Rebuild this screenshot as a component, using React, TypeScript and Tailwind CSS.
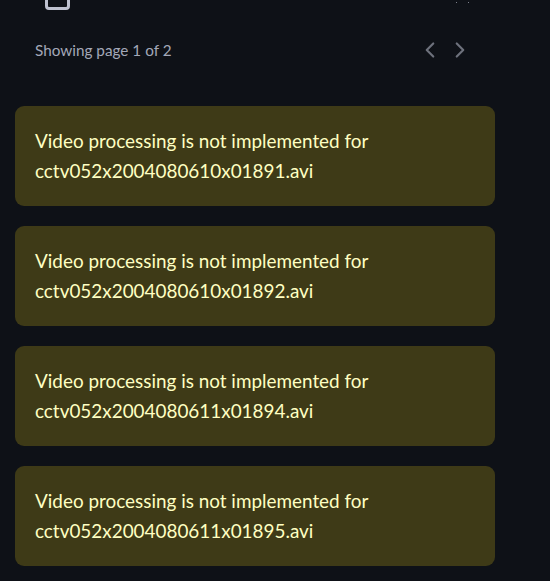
import React from "react";
import { ChevronLeft, ChevronRight } from "lucide-react";

const files = [
  "cctv052x2004080610x01891.avi",
  "cctv052x2004080610x01892.avi",
  "cctv052x2004080611x01894.avi",
  "cctv052x2004080611x01895.avi",
];

export default function App() {
  return (
    <div className="min-h-[581px] w-[550px] overflow-hidden bg-[#0e1117] font-['Lato',sans-serif]">
      <div className="relative h-[10px] overflow-hidden">
        <div className="absolute left-[45px] top-[-14px] h-[24px] w-[25px] rounded-[4px] border-[3px] border-[#bfc2d0]" />
        <div className="absolute left-[456px] top-[2px] h-[1px] w-[1px] bg-[#7d818c]" />
        <div className="absolute left-[468px] top-[2px] h-[1px] w-[1px] bg-[#7d818c]" />
      </div>
      <div className="mt-[26px] flex h-[28px] w-[495px] items-center justify-between pl-[35px] pr-[22px]">
        <span className="text-[15.3px] text-[#a3a8b8]">Showing page 1 of 2</span>
        <div className="flex items-center gap-[4px] text-[#6d717c]">
          <ChevronLeft size={26} strokeWidth={2} />
          <ChevronRight size={26} strokeWidth={2} />
        </div>
      </div>
      <div className="ml-[15px] mt-[42px] flex w-[480px] flex-col gap-[20px]">
        {files.map((f) => (
          <div
            key={f}
            className="flex h-[100px] flex-col justify-center rounded-[9px] bg-[#3e3a17] px-[20px] text-[18.9px] leading-[30px] text-[#ffffc2]"
          >
            <div>Video processing is not implemented for</div>
            <div>{f}</div>
          </div>
        ))}
      </div>
    </div>
  );
}
